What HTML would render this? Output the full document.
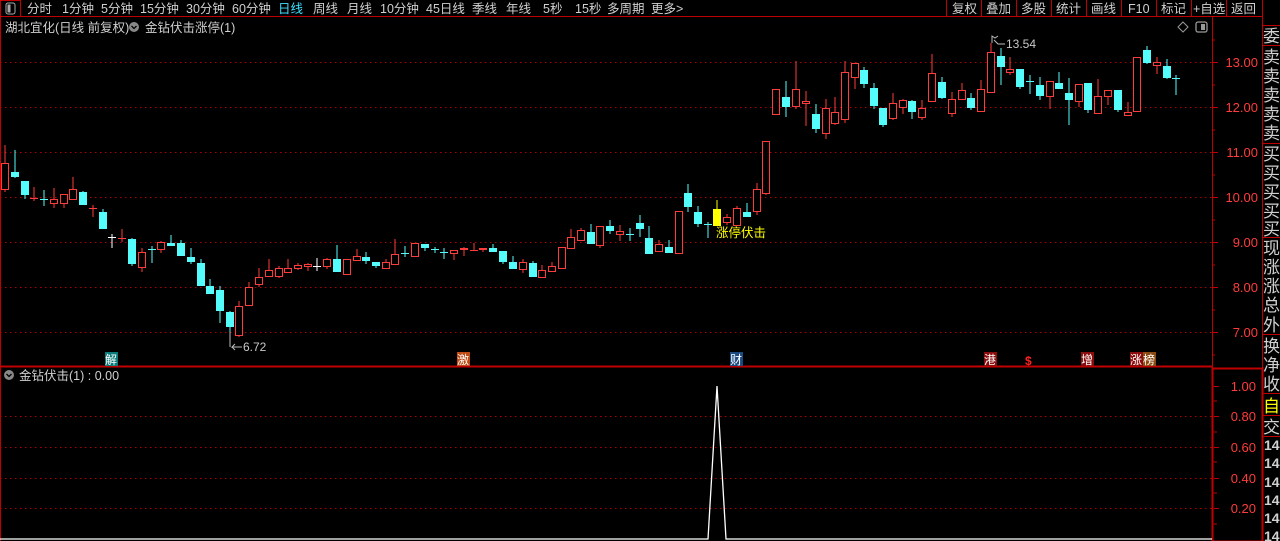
<!DOCTYPE html>
<html><head><meta charset="utf-8"><style>
body{margin:0;width:1280px;height:541px;background:#000;overflow:hidden;font-family:"Liberation Sans","Noto Sans CJK SC",sans-serif;}
svg{position:absolute;left:0;top:0}
</style></head><body>
<svg width="1280" height="541" xmlns="http://www.w3.org/2000/svg" font-family="Liberation Sans, Noto Sans CJK SC, sans-serif">
<!-- toolbar -->
<line x1="0" y1="16.5" x2="1262" y2="16.5" stroke="#c00000"/>
<rect x="0.5" y="0.5" width="20" height="16" fill="none" stroke="#c00000"/>
<rect x="6" y="3" width="9" height="11" rx="2" fill="none" stroke="#aaa"/>
<rect x="7.5" y="4.5" width="3" height="8" fill="#aaa"/>
<g fill="#d0d0d0" font-size="12.5">
<text x="27" y="13">分时</text><text x="62" y="13">1分钟</text><text x="101" y="13">5分钟</text><text x="140" y="13">15分钟</text><text x="186" y="13">30分钟</text><text x="232" y="13">60分钟</text>
<text x="278" y="13" fill="#40e0ff">日线</text><text x="313" y="13">周线</text><text x="347" y="13">月线</text><text x="380" y="13">10分钟</text><text x="426" y="13">45日线</text><text x="472" y="13">季线</text><text x="506" y="13">年线</text><text x="543" y="13">5秒</text><text x="575" y="13">15秒</text><text x="607" y="13">多周期</text><text x="651" y="13">更多</text><text x="676" y="13">&gt;</text>
</g>
<g stroke="#c00000">
<line x1="946.5" y1="0" x2="946.5" y2="16"/><line x1="981.5" y1="0" x2="981.5" y2="16"/><line x1="1016.5" y1="0" x2="1016.5" y2="16"/><line x1="1051.5" y1="0" x2="1051.5" y2="16"/><line x1="1086.5" y1="0" x2="1086.5" y2="16"/><line x1="1121.5" y1="0" x2="1121.5" y2="16"/><line x1="1156.5" y1="0" x2="1156.5" y2="16"/><line x1="1191.5" y1="0" x2="1191.5" y2="16"/><line x1="1226.5" y1="0" x2="1226.5" y2="16"/><line x1="1262.5" y1="0" x2="1262.5" y2="541"/>
</g>
<g fill="#d0d0d0" font-size="12.5">
<text x="952" y="13">复权</text><text x="986" y="13">叠加</text><text x="1021" y="13">多股</text><text x="1056" y="13">统计</text><text x="1091" y="13">画线</text><text x="1128" y="13">F10</text><text x="1161" y="13">标记</text><text x="1193" y="13">+自选</text><text x="1231" y="13">返回</text>
</g>
<!-- frame -->
<line x1="0.5" y1="16" x2="0.5" y2="541" stroke="#c00000"/>
<line x1="1212.5" y1="16" x2="1212.5" y2="541" stroke="#c00000"/>
<line x1="0" y1="366.5" x2="1212" y2="366.5" stroke="#c00000" stroke-width="2"/>
<rect x="1212.5" y="368.5" width="50" height="173" fill="none" stroke="#c00000" stroke-width="2"/>
<!-- header -->
<text x="5" y="32" fill="#d0d0d0" font-size="12.5">湖北宜化(日线 前复权)</text>
<circle cx="134" cy="27" r="5" fill="#888"/><path d="M131.5 26 l2.5 2.5 2.5-2.5" stroke="#000" fill="none" stroke-width="1.3"/>
<text x="145" y="32" fill="#d0d0d0" font-size="12.5">金钻伏击涨停(1)</text>
<path d="M1183 22 l5 5 -5 5 -5-5z" fill="none" stroke="#999"/>
<rect x="1196" y="22" width="11" height="10" rx="2" fill="none" stroke="#999" stroke-width="1.3"/><rect x="1201" y="24" width="4" height="6" fill="#999"/>
<text x="5" y="381" fill="#d0d0d0" font-size="12.5">&#160;</text>
<circle cx="9" cy="375" r="5" fill="#888"/><path d="M6.5 374 l2.5 2.5 2.5-2.5" stroke="#000" fill="none" stroke-width="1.3"/>
<text x="19" y="380" fill="#d0d0d0" font-size="12.5">金钻伏击(1) : 0.00</text>
<!-- grid -->
<g stroke="#b00000" stroke-dasharray="1.5 3.5">
<line x1="0" y1="62.5" x2="1212" y2="62.5"/><line x1="0" y1="107.5" x2="1212" y2="107.5"/><line x1="0" y1="152.5" x2="1212" y2="152.5"/><line x1="0" y1="197.5" x2="1212" y2="197.5"/><line x1="0" y1="242.5" x2="1212" y2="242.5"/><line x1="0" y1="287.5" x2="1212" y2="287.5"/><line x1="0" y1="332.5" x2="1212" y2="332.5"/>
<line x1="0" y1="416.5" x2="1212" y2="416.5"/><line x1="0" y1="447.5" x2="1212" y2="447.5"/><line x1="0" y1="478.5" x2="1212" y2="478.5"/><line x1="0" y1="508.5" x2="1212" y2="508.5"/>
</g>
<g stroke="#c00000">
<path d="M1212 62.5h6M1212 107.5h6M1212 152.5h6M1212 197.5h6M1212 242.5h6M1212 287.5h6M1212 332.5h6M1212 40h3M1212 85h3M1212 130h3M1212 175h3M1212 220h3M1212 265h3M1212 310h3M1212 355h3"/>
<path d="M1214 386.5h5M1214 416.5h5M1214 447.5h5M1214 478.5h5M1214 508.5h5M1214 401h3M1214 432h3M1214 462h3M1214 493h3M1214 524h3"/>
</g>
<g fill="#ff3c3c" font-size="13" text-anchor="end">
<text x="1258" y="67">13.00</text><text x="1258" y="112">12.00</text><text x="1258" y="157">11.00</text><text x="1258" y="202">10.00</text><text x="1258" y="247">9.00</text><text x="1258" y="292">8.00</text><text x="1258" y="337">7.00</text>
<text x="1256" y="391">1.00</text><text x="1256" y="421">0.80</text><text x="1256" y="452">0.60</text><text x="1256" y="483">0.40</text><text x="1256" y="513">0.20</text>
</g>
<!-- right sidebar -->
<g stroke="#c00000"><path d="M1262 25.5h18M1262 45.5h18M1262 143.5h18M1262 237.5h18M1262 334.5h18M1262 393.5h18M1262 415.5h18M1262 436.5h18"/></g>
<g fill="#d0d0d0" font-size="17">
<text x="1263" y="42">委</text><text x="1263" y="63">卖</text><text x="1263" y="82">卖</text><text x="1263" y="101">卖</text><text x="1263" y="120">卖</text><text x="1263" y="139">卖</text>
<text x="1263" y="160">买</text><text x="1263" y="179">买</text><text x="1263" y="198">买</text><text x="1263" y="217">买</text><text x="1263" y="235">买</text>
<text x="1263" y="254">现</text><text x="1263" y="273">涨</text><text x="1263" y="292">涨</text><text x="1263" y="311">总</text><text x="1263" y="331">外</text>
<text x="1263" y="352">换</text><text x="1263" y="371">净</text><text x="1263" y="390">收</text>
<text x="1263" y="412" fill="#ffff00">自</text><text x="1263" y="433">交</text>
<g font-size="14" font-weight="bold"><text x="1264" y="450">14</text><text x="1264" y="468">14</text><text x="1264" y="487">14</text><text x="1264" y="505">14</text><text x="1264" y="523">14</text><text x="1264" y="541">14</text></g>
</g>
<!-- candles -->
<g stroke="#ff3c3c" fill="#000">
<path d="M5 145V192M34 187V201M54 188V208M64 194V208M73 177V199M93 205V217M122 229V242M142 248V272M161 241V253M239 301V337M249 282V305M259 268V287M269 259V277M279 266V278M288 259V272M298 263V270M308 263V271M327 258V269M347 259V274M357 249V261M386 259V268M395 239V264M415 243V256M454 250V260M464 247V256M474 243V251M483 248V252M523 259V273M542 265V277M552 262V271M562 247V268M571 229V248M581 228V240M600 226V248M620 225V241M659 240V251M679 211V253M727 214V225M737 206V225M757 183V215M766 141V195M776 89V114M796 61V109M806 91V126M826 99V139M835 97V125M845 61V123M855 63V89M893 93V120M903 99V114M922 100V120M932 54V101M952 92V117M962 83V99M981 80V111M991 43V92M1010 57V75M1050 81V109M1079 84V107M1098 79V113M1108 90V105M1128 102V115M1137 57V111M1157 57V74"/>
<path d="M30 198.5h8M118 238.5h8M89 208.5h8M470 250.5h8"/>
<rect x="1.5" y="163.5" width="7" height="26"/><rect x="50.5" y="199.5" width="7" height="4"/><rect x="60.5" y="194.5" width="7" height="9"/><rect x="69.5" y="189.5" width="7" height="10"/><rect x="138.5" y="252.5" width="7" height="15"/><rect x="157.5" y="242.5" width="7" height="7"/><rect x="235.5" y="306.5" width="7" height="29"/><rect x="245.5" y="287.5" width="7" height="18"/><rect x="255.5" y="277.5" width="7" height="7"/><rect x="265.5" y="270.5" width="7" height="6"/><rect x="275.5" y="268.5" width="7" height="8"/><rect x="284.5" y="268.5" width="7" height="4"/><rect x="294.5" y="265.5" width="7" height="3"/><rect x="304.5" y="264.5" width="7" height="2"/><rect x="323.5" y="259.5" width="7" height="7"/><rect x="343.5" y="259.5" width="7" height="15"/><rect x="353.5" y="256.5" width="7" height="4"/><rect x="382.5" y="262.5" width="7" height="6"/><rect x="391.5" y="254.5" width="7" height="10"/><rect x="411.5" y="243.5" width="7" height="13"/><rect x="450.5" y="250.5" width="7" height="3"/><rect x="460.5" y="248.5" width="7" height="1"/><rect x="479.5" y="248.5" width="7" height="1"/><rect x="519.5" y="262.5" width="7" height="7"/><rect x="538.5" y="270.5" width="7" height="7"/><rect x="548.5" y="266.5" width="7" height="5"/><rect x="558.5" y="247.5" width="7" height="21"/><rect x="567.5" y="237.5" width="7" height="11"/><rect x="577.5" y="230.5" width="7" height="10"/><rect x="596.5" y="226.5" width="7" height="19"/><rect x="616.5" y="231.5" width="7" height="3"/><rect x="655.5" y="244.5" width="7" height="7"/><rect x="675.5" y="211.5" width="7" height="42"/><rect x="723.5" y="217.5" width="7" height="5"/><rect x="733.5" y="208.5" width="7" height="17"/><rect x="753.5" y="189.5" width="7" height="22"/><rect x="762.5" y="141.5" width="7" height="52"/><rect x="772.5" y="89.5" width="7" height="25"/><rect x="792.5" y="89.5" width="7" height="17"/><rect x="802.5" y="101.5" width="7" height="2"/><rect x="822.5" y="108.5" width="7" height="25"/><rect x="831.5" y="112.5" width="7" height="11"/><rect x="841.5" y="72.5" width="7" height="47"/><rect x="851.5" y="63.5" width="7" height="14"/><rect x="889.5" y="103.5" width="7" height="15"/><rect x="899.5" y="100.5" width="7" height="7"/><rect x="918.5" y="108.5" width="7" height="9"/><rect x="928.5" y="73.5" width="7" height="28"/><rect x="948.5" y="99.5" width="7" height="14"/><rect x="958.5" y="90.5" width="7" height="9"/><rect x="977.5" y="89.5" width="7" height="22"/><rect x="987.5" y="52.5" width="7" height="40"/><rect x="1006.5" y="69.5" width="7" height="3"/><rect x="1046.5" y="81.5" width="7" height="15"/><rect x="1075.5" y="84.5" width="7" height="17"/><rect x="1094.5" y="96.5" width="7" height="17"/><rect x="1104.5" y="90.5" width="7" height="6"/><rect x="1124.5" y="112.5" width="7" height="3"/><rect x="1133.5" y="57.5" width="7" height="54"/><rect x="1153.5" y="62.5" width="7" height="3"/>
</g>
<g stroke="#54fcfc" fill="#54fcfc">
<path d="M15 150V178M25 181V199M44 190V206M83 191V205M103 209V228M132 238V266M152 246V263M171 235V246M181 240V256M191 248V264M201 259V286M210 279V293M220 286V323M230 311V344M337 245V271M366 252V264M376 262V268M405 246V257M425 244V251M435 247V253M444 248V259M493 244V251M503 251V264M513 256V268M533 261V276M591 224V244M610 220V234M630 228V241M640 215V237M649 226V253M669 240V252M688 184V212M698 206V227M708 222V238M747 203V217M786 81V117M816 104V133M864 67V88M874 83V109M883 108V127M912 100V119M942 77V99M971 93V110M1001 48V85M1020 69V89M1030 75V94M1040 77V100M1059 72V88M1069 78V125M1088 83V113M1118 90V112M1147 46V64M1167 59V79M1176 75V95"/>
<path d="M40 199.5h8M148 249.5h8M401 253.5h8M431 249.5h8M440 252.5h8M626 234.5h8M704 224.5h8M1026 81.5h8M1172 78.5h8"/>
<rect x="11.5" y="172.5" width="7" height="4"/><rect x="21.5" y="181.5" width="7" height="13"/><rect x="79.5" y="192.5" width="7" height="12"/><rect x="99.5" y="212.5" width="7" height="16"/><rect x="128.5" y="239.5" width="7" height="24"/><rect x="167.5" y="243.5" width="7" height="2"/><rect x="177.5" y="243.5" width="7" height="12"/><rect x="187.5" y="257.5" width="7" height="4"/><rect x="197.5" y="263.5" width="7" height="22"/><rect x="206.5" y="286.5" width="7" height="7"/><rect x="216.5" y="290.5" width="7" height="20"/><rect x="226.5" y="312.5" width="7" height="14"/><rect x="333.5" y="259.5" width="7" height="12"/><rect x="362.5" y="257.5" width="7" height="3"/><rect x="372.5" y="262.5" width="7" height="3"/><rect x="421.5" y="244.5" width="7" height="3"/><rect x="489.5" y="248.5" width="7" height="3"/><rect x="499.5" y="251.5" width="7" height="10"/><rect x="509.5" y="262.5" width="7" height="6"/><rect x="529.5" y="263.5" width="7" height="13"/><rect x="587.5" y="232.5" width="7" height="11"/><rect x="606.5" y="226.5" width="7" height="4"/><rect x="636.5" y="223.5" width="7" height="5"/><rect x="645.5" y="238.5" width="7" height="15"/><rect x="665.5" y="247.5" width="7" height="5"/><rect x="684.5" y="193.5" width="7" height="13"/><rect x="694.5" y="212.5" width="7" height="11"/><rect x="743.5" y="212.5" width="7" height="4"/><rect x="782.5" y="97.5" width="7" height="9"/><rect x="812.5" y="114.5" width="7" height="14"/><rect x="860.5" y="70.5" width="7" height="13"/><rect x="870.5" y="88.5" width="7" height="17"/><rect x="879.5" y="108.5" width="7" height="16"/><rect x="908.5" y="101.5" width="7" height="10"/><rect x="938.5" y="82.5" width="7" height="15"/><rect x="967.5" y="98.5" width="7" height="9"/><rect x="997.5" y="56.5" width="7" height="10"/><rect x="1016.5" y="69.5" width="7" height="17"/><rect x="1036.5" y="85.5" width="7" height="10"/><rect x="1055.5" y="83.5" width="7" height="5"/><rect x="1065.5" y="93.5" width="7" height="6"/><rect x="1084.5" y="83.5" width="7" height="26"/><rect x="1114.5" y="90.5" width="7" height="19"/><rect x="1143.5" y="50.5" width="7" height="12"/><rect x="1163.5" y="66.5" width="7" height="11"/>
</g>
<g stroke="#fff"><path d="M112 234V248M108 237.5h8M317 258V271M313 266.5h8"/></g>
<g stroke="#ff0" fill="#ff0"><path d="M717 200V226"/><rect x="713.5" y="209.5" width="7" height="16"/></g>
<text x="716" y="237" fill="#ffff00" font-size="12.5">涨停伏击</text>
<!-- hi/lo labels -->
<path d="M242 347h-10l3-3M232 347l3 3M230 332V347" stroke="#bbb" fill="none"/>
<text x="243" y="351" fill="#c8c8c8" font-size="12">6.72</text>
<path d="M992 43V36l3 2 3-2M994 40l4 4h7" stroke="#bbb" fill="none"/>
<text x="1006" y="48" fill="#c8c8c8" font-size="12">13.54</text>
<!-- markers -->
<rect x="105" y="352" width="13" height="14" fill="#0a7a7a"/><text x="105" y="364" fill="#fff" font-size="12">解</text>
<rect x="457" y="352" width="13" height="14" fill="#c04a14"/><text x="457" y="364" fill="#fff" font-size="12">激</text>
<rect x="730" y="352" width="13" height="14" fill="#1a4a80"/><text x="730" y="364" fill="#fff" font-size="12">财</text>
<rect x="984" y="352" width="13" height="14" fill="#8a0c0c"/><text x="984" y="364" fill="#fff" font-size="12">港</text>
<text x="1025" y="365" fill="#ff2020" font-size="12" font-weight="bold">$</text>
<rect x="1081" y="352" width="13" height="14" fill="#8a0c0c"/><text x="1081" y="364" fill="#fff" font-size="12">增</text>
<rect x="1130" y="352" width="13" height="14" fill="#8a0c0c"/><text x="1130" y="364" fill="#fff" font-size="12">涨</text>
<rect x="1143" y="352" width="13" height="14" fill="#8a4a10"/><text x="1143" y="364" fill="#fff" font-size="12">榜</text>
<!-- indicator -->
<path d="M0 539H708L717 386L726 539H1212" stroke="#fff" fill="none" stroke-width="1.3"/>
</svg>
</body></html>
